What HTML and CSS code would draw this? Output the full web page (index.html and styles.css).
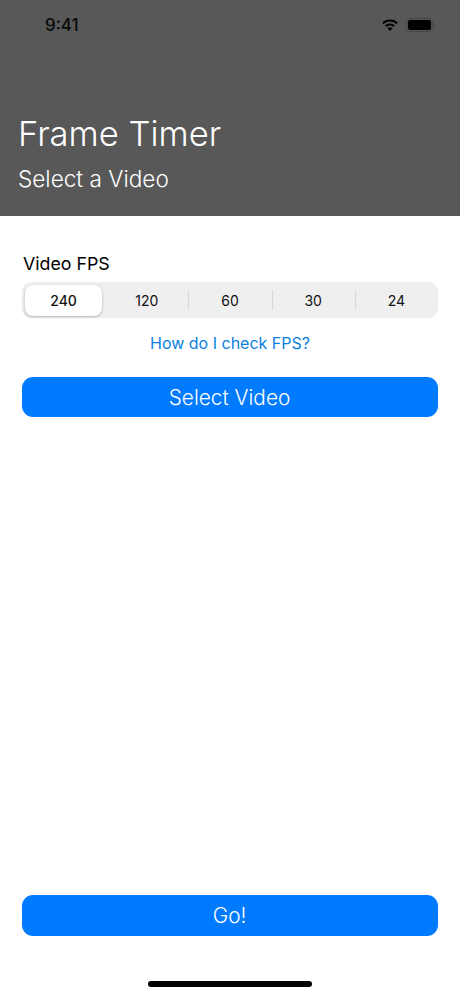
FILE: index.html
```html
<!DOCTYPE html>
<html lang="en">
<head>
  <meta charset="UTF-8">
  <title>Frame Timer</title>
  <link rel="stylesheet" href="styles.css">
</head>
<body>

  <header class="top">
    <div class="status">
      <span class="time">9:41</span>
      <div class="status-icons">
        <svg class="wifi" width="18" height="13" viewBox="0 0 18 13">
          <path d="M9 2.6c2.5 0 4.7 1 6.4 2.600l1.300-1.400C14.700 1.800 12 .6 9 .6S3.300 1.800 1.300 3.800l1.300 1.400C4.300 3.600 6.500 2.600 9 2.600z"/>
          <path d="M9 6.400c1.400 0 2.700.5 3.700 1.500l1.300-1.400C12.700 5.200 10.900 4.400 9 4.400s-3.700.8-5 2.100l1.300 1.400c1-1 2.300-1.500 3.700-1.500z"/>
          <path d="M9 8.200c-1 0-1.900.4-2.500 1L9 12l2.500-2.800c-.6-.6-1.500-1-2.500-1z"/>
        </svg>
        <div class="battery"><div class="battery-fill"></div></div>
        <div class="battery-cap"></div>
      </div>
    </div>
    <h1>Frame Timer</h1>
    <p class="subtitle">Select a Video</p>
  </header>

  <main class="content">
    <div class="label">Video FPS</div>
    <div class="segments">
      <div class="seg active">240</div>
      <div class="seg">120</div>
      <div class="seg divided">60</div>
      <div class="seg divided">30</div>
      <div class="seg divided">24</div>
    </div>
    <a class="help" href="#">How do I check FPS?</a>
    <button class="btn">Select Video</button>
    <button class="btn go">Go!</button>
  </main>

  <div class="home-bar"></div>

</body>
</html>
```

FILE: styles.css
```css
html, body {
  height: 100%;
}

body {
  font-family: Inter, "Liberation Sans", sans-serif;
  margin: 0;
  padding: 0;
  background-color: #fff;
  display: flex;
  flex-direction: column;
  height: 996px;
  overflow: hidden;
}

.top {
  height: 216px;
  box-sizing: border-box;
  background-color: #585858;
  color: white;
  padding: 0 18px;
}

.status {
  height: 50px;
  display: flex;
  align-items: center;
  justify-content: space-between;
  padding: 0 7px 0 27px;
  color: #0a0a0a;
}

.time {
  font-size: 17px;
  font-weight: 500;
}

.status-icons {
  display: flex;
  align-items: center;
}

.wifi {
  fill: #000;
  margin-right: 7px;
}

.battery {
  width: 27px;
  height: 14px;
  box-sizing: border-box;
  border: 1px solid #444;
  border-radius: 4px;
  padding: 1px;
}

.battery-fill {
  height: 100%;
  background: #000;
  border-radius: 2px;
}

.battery-cap {
  width: 1px;
  height: 4px;
  margin-left: 1px;
  background: #444;
}

h1 {
  margin: 61px 0 0;
  font-size: 34.6px;
  line-height: 44px;
  font-weight: 300;
}

.subtitle {
  margin: 9px 0 0;
  font-size: 22.6px;
  line-height: 30px;
  font-weight: 300;
}

.content {
  flex: 1;
  display: flex;
  flex-direction: column;
  padding: 37px 22px 0;
}

.label {
  font-size: 17.8px;
  line-height: 22px;
  color: #000;
  margin-left: 1px;
}

.segments {
  display: grid;
  grid-template-columns: repeat(5, 1fr);
  height: 36px;
  margin-top: 7px;
  box-sizing: border-box;
  background: #efeff0;
  border-radius: 9px;
}

.seg {
  display: flex;
  align-items: center;
  justify-content: center;
  font-size: 14px;
  color: #111;
  position: relative;
}

.seg.active {
  margin: 3px 3px 2px;
  background: white;
  border-radius: 8px;
  font-weight: 500;
  box-shadow: 0 1px 3px rgba(0, 0, 0, 0.25);
}

.seg.divided::before {
  content: "";
  position: absolute;
  left: 0;
  top: 8px;
  bottom: 8px;
  width: 1px;
  background: #d8d8da;
}

.help {
  align-self: center;
  margin-top: 15px;
  font-size: 16px;
  line-height: 20px;
  color: #0a7fe0;
  text-decoration: none;
}

.btn {
  height: 40px;
  margin-top: 24px;
  padding: 0 1px 0 0;
  background-color: #007aff;
  color: white;
  border: none;
  border-radius: 11px;
  font-family: inherit;
  font-size: 20.8px;
  font-weight: 300;
  cursor: pointer;
}

.btn.go {
  margin-top: auto;
  margin-bottom: 60px;
  height: 41px;
}

.home-bar {
  position: absolute;
  left: 148px;
  top: 981px;
  width: 164px;
  height: 6px;
  background: #000;
  border-radius: 3px;
}
```
